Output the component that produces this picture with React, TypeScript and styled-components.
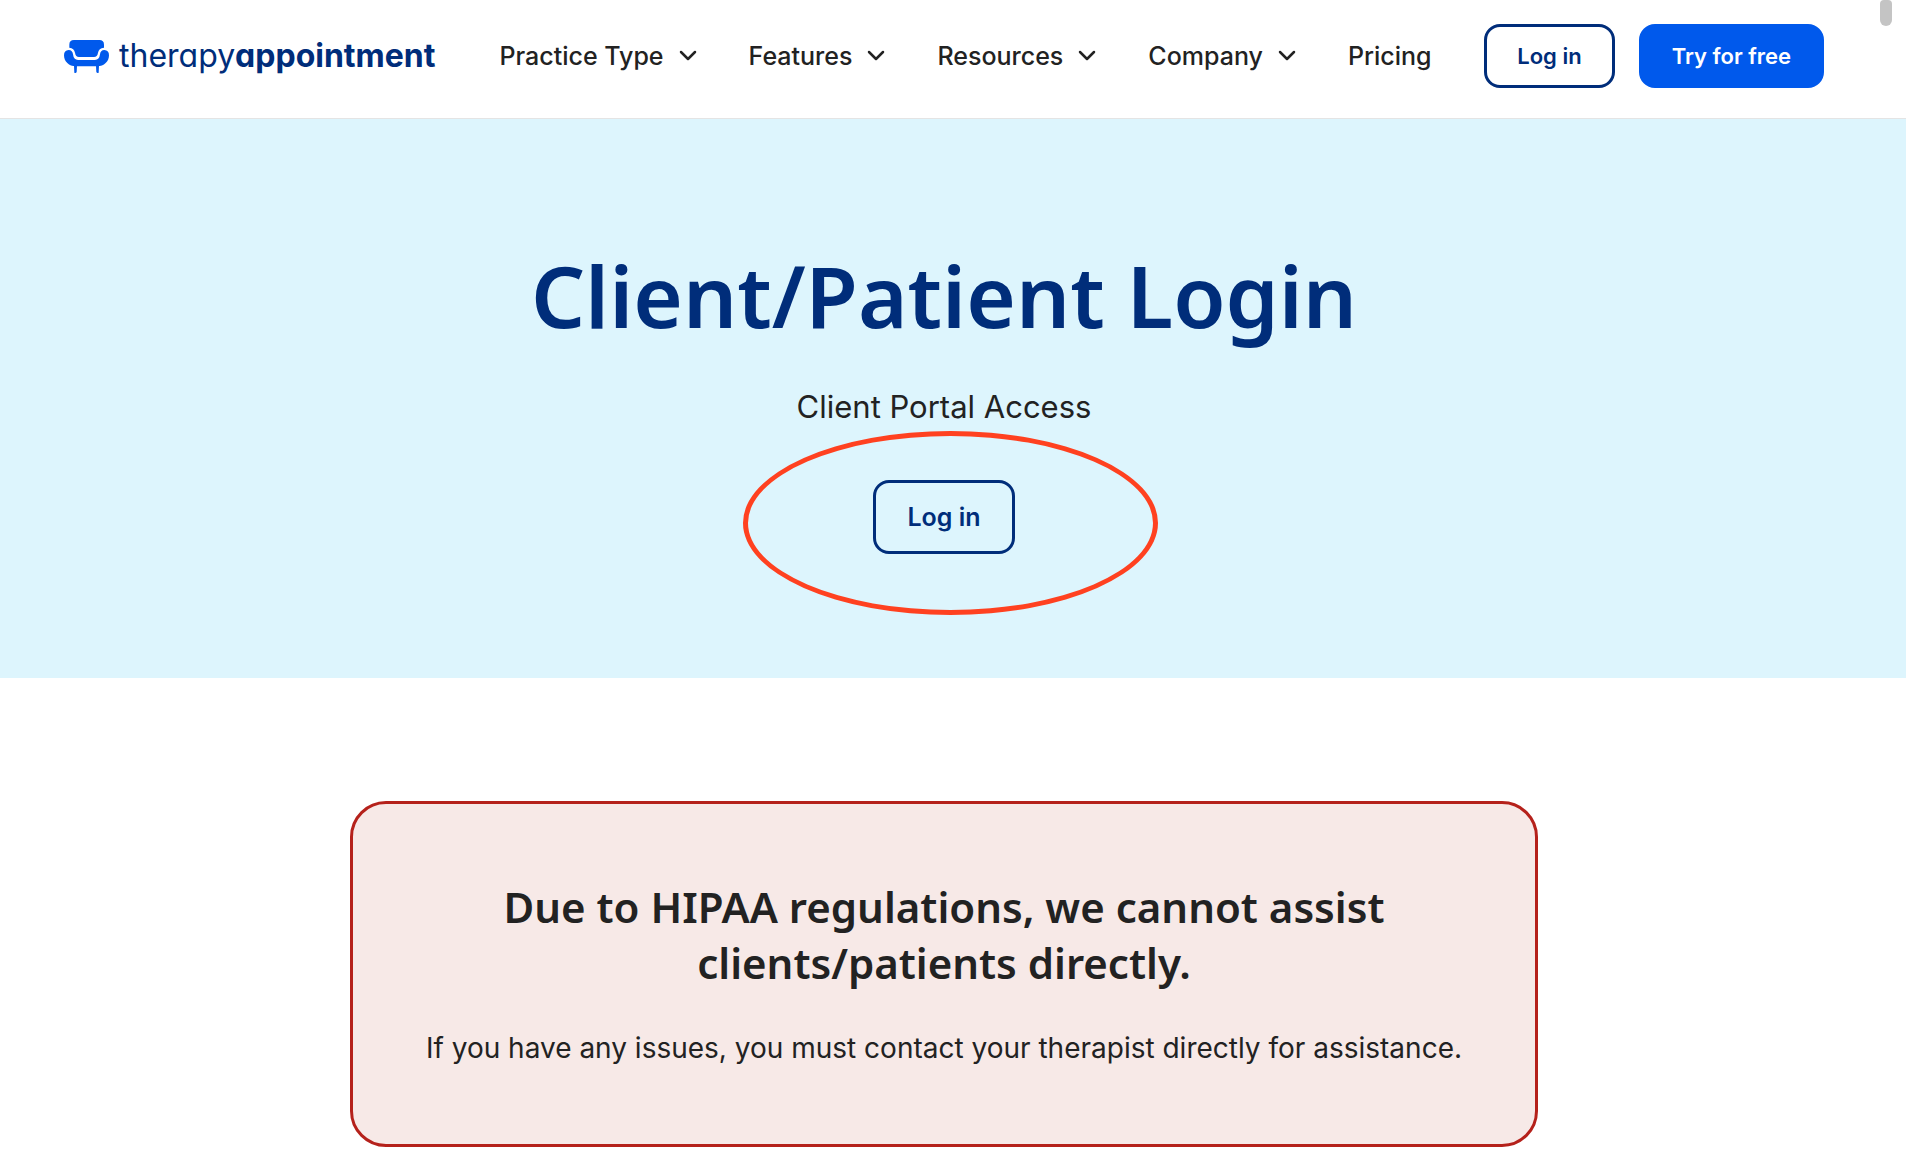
import React from 'react';
import styled, { createGlobalStyle, css } from 'styled-components';

const navy = '#002d7a';
const blue = '#0059ec';
const ink = '#222222';
const sans = "Inter, 'Liberation Sans', sans-serif";
const display = "'Noto Sans', 'Open Sans', sans-serif";

const GlobalStyle = createGlobalStyle`
  *, *::before, *::after { box-sizing: border-box; }
  body {
    margin: 0;
    background: #ffffff;
    color: ${ink};
    font-family: ${sans};
    font-optical-sizing: none;
  }
  h1, h2, p { margin: 0; }
`;

const Page = styled.div`
  position: relative;
  min-height: 100vh;
`;

const ScrollThumb = styled.div`
  position: absolute;
  top: 0;
  right: 14px;
  width: 12px;
  height: 26px;
  border-radius: 4px 4px 6px 6px;
  background: #c4c4c4;
`;

const Header = styled.header`
  display: flex;
  align-items: center;
  gap: 48px;
  padding: 24px 82px 30px 64px;
  border-bottom: 1px solid #e4e4e4;
`;

const Brand = styled.a`
  display: flex;
  align-items: center;
  gap: 10px;
  color: ${navy};
  font-size: 32px;
  line-height: 40px;
  font-feature-settings: 'cv11';
  text-decoration: none;
`;

const BrandStrong = styled.strong`
  font-weight: 700;
`;

const Nav = styled.nav`
  display: flex;
  align-items: center;
  gap: 52px;
  margin-left: 16px;
`;

const navItem = css`
  color: ${ink};
  font-family: ${sans};
  font-size: 25px;
  font-weight: 450;
  line-height: 32px;
  white-space: nowrap;
`;

const NavMenu = styled.button`
  ${navItem}
  display: flex;
  align-items: center;
  gap: 15px;
  padding: 0;
  border: 0;
  background: none;
`;

const NavLink = styled.a`
  ${navItem}
  text-decoration: none;
`;

const Actions = styled.div`
  display: flex;
  gap: 24px;
  margin-left: auto;
`;

const ButtonLink = styled.a<{ $filled?: boolean; $large?: boolean }>`
  display: inline-flex;
  align-items: center;
  justify-content: center;
  height: ${(p) => (p.$large ? 74 : 64)}px;
  padding: 0 ${(p) => (p.$large ? 31 : 30)}px;
  border: 3px solid ${(p) => (p.$filled ? blue : navy)};
  border-radius: 16px;
  background: ${(p) => (p.$filled ? blue : 'transparent')};
  color: ${(p) => (p.$filled ? '#ffffff' : navy)};
  font-size: ${(p) => (p.$large ? 25 : 22)}px;
  font-weight: 600;
  line-height: 32px;
  text-decoration: none;
  white-space: nowrap;
`;

const Hero = styled.section`
  display: flex;
  flex-direction: column;
  align-items: center;
  padding: 124px 82px 124px 64px;
  background: #ddf5fd;
  text-align: center;
`;

const Title = styled.h1`
  color: ${navy};
  font-family: ${display};
  font-size: 85px;
  font-weight: 600;
  line-height: 104px;
`;

const Subtitle = styled.p`
  margin: 36px 0 49px;
  font-size: 31px;
  line-height: 48px;
`;

const Highlight = styled.div`
  position: relative;
  display: flex;
`;

const Ring = styled.span`
  position: absolute;
  top: -49px;
  left: -130px;
  width: 415px;
  height: 184px;
  border: 5px solid #ff4120;
  border-radius: 50%;
  pointer-events: none;
`;

const Content = styled.main`
  display: flex;
  justify-content: center;
  padding: 123px 82px 15px 64px;
`;

const Notice = styled.section`
  flex: 0 1 1188px;
  padding: 75px 72px;
  border: 3px solid #b5211b;
  border-radius: 36px;
  background: #f7e9e7;
  text-align: center;
`;

const NoticeTitle = styled.h2`
  margin-bottom: 36px;
  font-family: ${display};
  font-size: 42px;
  font-weight: 600;
  line-height: 56px;
`;

const NoticeText = styled.p`
  font-size: 28px;
  line-height: 42px;
`;

const Couch = () => (
  <svg width="45" height="33" viewBox="0 0 135 99" fill={blue} aria-hidden="true">
    <path d="M30 0H106Q120 0 120 14V23C109 24 104 29 102 38Q100 51 90 51H45Q35 51 33 38C31 29 26 24 16 23V14Q16 0 30 0Z" />
    <path d="M14 30C22 30 26 35 27 43Q29 60 42 60H93Q106 60 108 43C109 35 113 30 121 30Q135 31 135 46C135 65 120 79 100 79H35C15 79 0 65 0 46Q0 31 14 30Z" />
    <path d="M30 77H39L38 96Q36 100 31 98ZM96 77H105L104 98Q99 100 97 96Z" />
  </svg>
);

const Chevron = () => (
  <svg width="18" height="12" viewBox="0 0 18 12" fill="none" stroke={ink} strokeWidth="2.5" strokeLinecap="round" strokeLinejoin="round" aria-hidden="true">
    <path d="M2 2L9 9L16 2" />
  </svg>
);

const menus = ['Practice Type', 'Features', 'Resources', 'Company'];

export default function App() {
  return (
    <Page>
      <GlobalStyle />
      <Header>
        <Brand href="#">
          <Couch />
          <span>therapy<BrandStrong>appointment</BrandStrong></span>
        </Brand>
        <Nav>
          {menus.map((label) => (
            <NavMenu key={label} type="button">
              {label}
              <Chevron />
            </NavMenu>
          ))}
          <NavLink href="#">Pricing</NavLink>
        </Nav>
        <Actions>
          <ButtonLink href="#">Log in</ButtonLink>
          <ButtonLink href="#" $filled>Try for free</ButtonLink>
        </Actions>
      </Header>
      <Hero>
        <Title>Client/Patient Login</Title>
        <Subtitle>Client Portal Access</Subtitle>
        <Highlight>
          <ButtonLink href="#" $large>Log in</ButtonLink>
          <Ring />
        </Highlight>
      </Hero>
      <Content>
        <Notice>
          <NoticeTitle>Due to HIPAA regulations, we cannot assist clients/patients directly.</NoticeTitle>
          <NoticeText>If you have any issues, you must contact your therapist directly for assistance.</NoticeText>
        </Notice>
      </Content>
      <ScrollThumb />
    </Page>
  );
}
